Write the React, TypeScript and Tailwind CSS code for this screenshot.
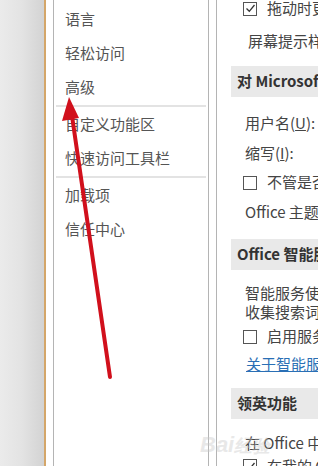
import React from 'react';

const font = { fontFamily: '"Noto Sans CJK SC", "Noto Sans", sans-serif' };

const Check = ({ checked }: { checked?: boolean }) => (
    <div className="w-[14px] h-[14px] border border-[#555] bg-white flex items-center justify-center shrink-0">
        {checked && (
            <svg width="11" height="11" viewBox="0 0 11 11">
                <path d="M1.5 5.5 L4.3 8.3 L9.5 2" fill="none" stroke="#333" strokeWidth="1.3" />
            </svg>
        )}
    </div>
);

const Header = ({ children }: { children: React.ReactNode }) => (
    <div className="ml-[14px] h-[31px] bg-[#e9e9e9] flex items-center pl-[6px] font-bold text-[#333] text-[15px]">
        {children}
    </div>
);

const NavItem = ({ label }: { label: string }) => (
    <div className="h-[34px] flex items-center pl-[11px] text-[15px] text-[#555]">{label}</div>
);

const Sep = () => <div className="h-[2px] bg-[#e3e3e3] ml-[2px] mr-[2px] my-[0.5px]" />;

export default function App() {
    return (
        <div className="relative w-[318px] h-[466px] overflow-hidden bg-white flex" style={font}>
            {/* window edge */}
            <div className="w-[46px] h-full bg-gradient-to-r from-[#ebebeb] via-[#e3e3e3] to-[#d3d3d3] border-r-2 border-[#d4a669] shrink-0" />
            <div className="w-[7px] shrink-0" />

            {/* nav */}
            <div className="w-[156px] h-full border-l border-r border-[#b4b4b4] pt-[2px] shrink-0 whitespace-nowrap">
                <NavItem label="语言" />
                <NavItem label="轻松访问" />
                <NavItem label="高级" />
                <Sep />
                <NavItem label="自定义功能区" />
                <NavItem label="快速访问工具栏" />
                <Sep />
                <NavItem label="加载项" />
                <NavItem label="信任中心" />
            </div>
            <div className="w-[7px] shrink-0" />

            {/* options */}
            <div className="flex-1 h-full border-l border-[#b4b4b4] text-[15px] text-[#444] whitespace-nowrap overflow-hidden">
                <div className="h-[17px] flex items-center gap-[10px] pl-[26px]">
                    <Check checked />
                    <span>拖动时更新文档内容(D)</span>
                </div>
                <div className="h-[49px] flex items-center pl-[31px]">屏幕提示样式(R):</div>
                <Header>对 Microsoft Office 进行个性化设置</Header>
                <div className="h-[11px]" />
                <div className="h-[30px] flex items-center pl-[28px]">
                    用户名(<span className="underline">U</span>):
                </div>
                <div className="h-[30px] flex items-center pl-[28px]">
                    缩写(<span className="underline">I</span>):
                </div>
                <div className="h-[29px] flex items-center gap-[10px] pl-[26px]">
                    <Check />
                    <span>不管是否登录到 Office 都始终使用这些值(A)</span>
                </div>
                <div className="h-[31px] flex items-center pl-[28px]">Office 主题(T):</div>
                <div className="h-[11px]" />
                <Header>Office 智能服务</Header>
                <div className="h-[13px]" />
                <div className="pl-[28px] leading-[19px]">
                    <div>智能服务使 Office 应用程序具有云功能</div>
                    <div>收集搜索词和文档内容等数据</div>
                </div>
                <div className="h-[31px] flex items-center gap-[10px] pl-[26px]">
                    <Check />
                    <span>启用服务(S)</span>
                </div>
                <div className="h-[24px] flex items-center pl-[29px] text-[#2a6fb5] underline">关于智能服务</div>
                <div className="h-[12px]" />
                <Header>领英功能</Header>
                <div className="h-[9px]" />
                <div className="h-[30px] flex items-center pl-[28px]">在 Office 中使用领英功能</div>
                <div className="h-[16px] flex items-center gap-[10px] pl-[26px]">
                    <Check checked />
                    <span>在我的 Office 应用程序中启用领英功能</span>
                </div>
            </div>

            {/* watermark */}
            <div className="absolute left-[200px] top-[428px] text-[22px] font-bold text-[#c8c8c8] opacity-40 italic" style={{ fontFamily: '"Liberation Sans", sans-serif' }}>
                Bai<span className="text-[18px]">经验</span>
            </div>

            {/* red annotation arrow */}
            <svg className="absolute left-0 top-0 pointer-events-none" width="318" height="466">
                <line x1="110" y1="377" x2="72" y2="116" stroke="#d1101c" strokeWidth="4" strokeLinecap="round" />
                <polygon points="69,97 62,121 79,118" fill="#d1101c" />
            </svg>
        </div>
    );
}
